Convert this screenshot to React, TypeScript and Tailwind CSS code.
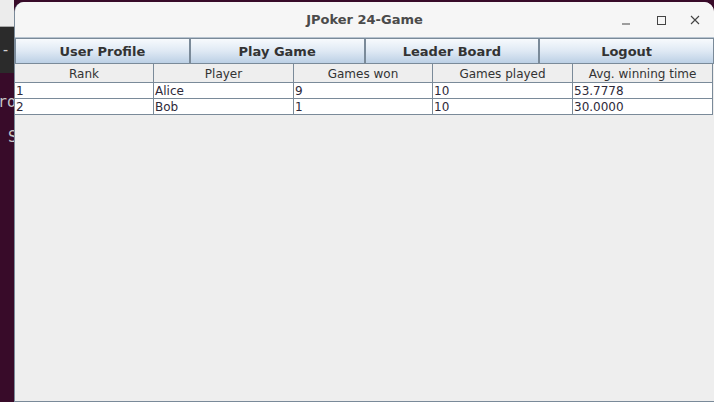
import React from 'react';

type Row = { rank: string; player: string; won: string; played: string; avg: string };

const rows: Row[] = [
    { rank: '1', player: 'Alice', won: '9', played: '10', avg: '53.7778' },
    { rank: '2', player: 'Bob', won: '1', played: '10', avg: '30.0000' },
];

const columns = ['Rank', 'Player', 'Games won', 'Games played', 'Avg. winning time'];
const menu = ['User Profile', 'Play Game', 'Leader Board', 'Logout'];

const DesktopStrip = () => {
    return (
        <div className="w-[14px] shrink-0 flex flex-col overflow-hidden font-['DejaVu_Sans_Mono',monospace] text-[15px]">
            <div className="h-[27px] bg-[#ececec] border-b border-[#a9a9a9]" />
            <div className="h-[46px] bg-[#2b2b2b] text-[#d0d0d0] pl-[1px] pt-[16px] leading-none">-</div>
            <div className="flex-1 bg-[#380b29] text-[#c8c8c8] leading-none">
                <div className="pt-[22px] -ml-[2px] whitespace-nowrap">ro</div>
                <div className="pt-[20px] pl-[8px]">S</div>
            </div>
        </div>
    );
};

const WindowControls = () => {
    return (
        <div className="absolute right-[14px] top-[13px] flex items-center gap-[24px] text-[#444]">
            <svg width="10" height="10" viewBox="0 0 10 10" className="mr-[1px]">
                <line x1="1" y1="9" x2="9" y2="9" stroke="currentColor" strokeWidth="1" />
            </svg>
            <svg width="10" height="10" viewBox="0 0 10 10">
                <rect x="1.5" y="1.5" width="8" height="8" fill="none" stroke="currentColor" strokeWidth="1" />
            </svg>
            <svg width="10" height="10" viewBox="0 0 10 10">
                <path d="M1 1 L9 9 M9 1 L1 9" stroke="currentColor" strokeWidth="1.1" />
            </svg>
        </div>
    );
};

const App = () => {
    return (
        <div className="w-[714px] h-[402px] flex bg-[#380b29] overflow-hidden font-['DejaVu_Sans',sans-serif]">
            <DesktopStrip />
            <div className="flex-1 flex flex-col mt-[2px] rounded-t-[10px] overflow-hidden bg-[#eeeeee] border-l border-b border-[#7a8a99]">
                {/* title bar */}
                <div className="relative h-[36px] shrink-0 bg-[#f6f6f6] border-b border-[#b8c4d0] flex items-center justify-center">
                    <span className="text-[13px] font-bold text-[#4b4b4b]">JPoker 24-Game</span>
                    <WindowControls />
                </div>

                {/* menu buttons */}
                <div className="grid grid-cols-4 h-[26px] shrink-0">
                    {menu.map(label => (
                        <button
                            key={label}
                            className="border border-[#7a8a99] bg-gradient-to-b from-[#f7fafd] via-[#dfe9f4] to-[#bcd0e5] text-[13px] font-bold text-[#333] leading-none"
                        >
                            {label}
                        </button>
                    ))}
                </div>

                {/* table */}
                <div className="grid grid-cols-[139px_140px_139px_140px_140px] text-[12px] text-[#333]">
                    {columns.map(col => (
                        <div key={col} className="h-[19px] flex items-center justify-center bg-[#eeeeee] border-r border-b border-[#7a8a99] pt-[1px]">
                            {col}
                        </div>
                    ))}
                    {rows.map(row => (
                        <React.Fragment key={row.rank}>
                            {[row.rank, row.player, row.won, row.played, row.avg].map((v, i) => (
                                <div key={i} className="h-[16px] flex items-center bg-white border-r border-b border-[#7a8a99] pl-[1px] text-[#2e2a3a]">
                                    {v}
                                </div>
                            ))}
                        </React.Fragment>
                    ))}
                </div>
                <div className="flex-1" />
            </div>
        </div>
    );
};

export default App;
